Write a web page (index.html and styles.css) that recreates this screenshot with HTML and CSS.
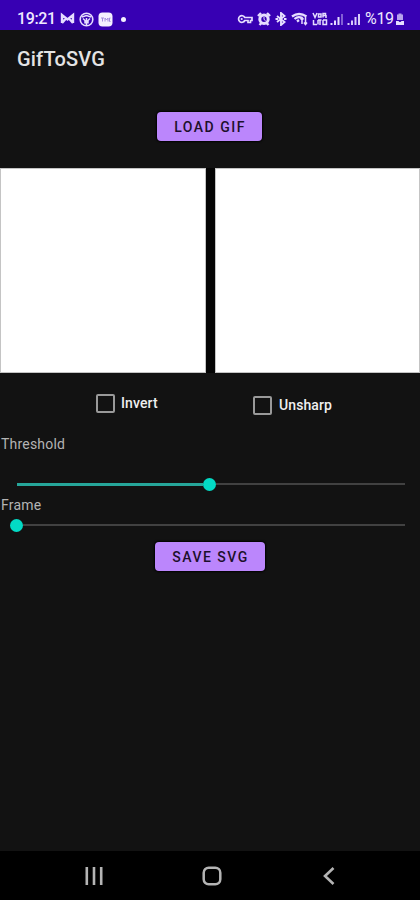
FILE: index.html
```html
<!DOCTYPE html>
<html lang="en">
<head>
  <title>GifToSVG</title>
  <meta charset="utf-8">
  <meta name="viewport" content="width=device-width, initial-scale=1.0">
  <link rel="stylesheet" href="styles.css">
</head>
<body>
  <div class="status-bar">
    <div class="status-left">
      <span class="clock">19:21</span>
      <svg class="icon" width="15" height="14" viewBox="0 0 15 14">
        <path d="M2 11V3l5.500 4.500L13 3v8M2 11l3.500-4M13 11l-3.500-4" fill="none" stroke="#e6ddff" stroke-width="2.400"/>
      </svg>
      <svg class="icon" width="15" height="15" viewBox="0 0 15 15">
        <circle cx="7.500" cy="7.500" r="6.300" fill="none" stroke="#e6ddff" stroke-width="1.600"/>
        <path d="M3 5l4.500-1.500L12 5M7.500 6v7M4 6.500l2 2v3M11 6.500l-2 2v3" fill="none" stroke="#e6ddff" stroke-width="1.500"/>
      </svg>
      <svg class="icon" width="15" height="15" viewBox="0 0 15 15">
        <rect x="0.500" y="0.500" width="14" height="14" rx="4" fill="#f4efff"/>
        <path d="M3 6h3M4.500 6v3.500M7 9.500V6l1.500 2L10 6v3.500M12.500 6h-1v3.500h1" fill="none" stroke="#a28bdd" stroke-width="1"/>
      </svg>
      <span class="dot"></span>
    </div>
    <div class="status-right">
      <svg class="icon" width="16" height="14" viewBox="0 0 16 14">
        <path d="M7.800 5.500A3.300 3.300 0 1 0 7.800 8.500H11V10.500H13.500V8.500H15V5.500Z" fill="none" stroke="#e6ddff" stroke-width="1.700"/>
        <circle cx="4.700" cy="7" r="1.100" fill="#e6ddff"/>
      </svg>
      <svg class="icon" width="14" height="14" viewBox="0 0 14 14">
        <path d="M1 4l3-3M13 4l-3-3M2.500 13l2-2M11.500 13l-2-2" stroke="#e6ddff" stroke-width="2.400"/>
        <circle cx="7" cy="7.300" r="4.200" fill="none" stroke="#e6ddff" stroke-width="3"/>
        <path d="M7 5v2.500l1.500 1" fill="none" stroke="#e6ddff"/>
      </svg>
      <svg class="icon" width="12" height="14" viewBox="0 0 12 14">
        <path d="M2 4l7.500 6L6 13V1l3.500 3L2 10" fill="none" stroke="#e6ddff" stroke-width="1.900"/>
        <path d="M0.500 7h2.500M9 7h2.500" stroke="#e6ddff" stroke-width="2"/>
      </svg>
      <svg class="icon" width="17" height="14" viewBox="0 0 17 14">
        <path d="M1 4.500Q8 -0.500 15.500 4.500M3.500 7Q7 4 11 6M6 9.500l2-1.500" fill="none" stroke="#e6ddff" stroke-width="2.300"/>
        <path d="M11 12V6M9.500 7.500L11 5.500l1.500 2M14.500 5v7M13 10.500l1.500 2 1.500-2" fill="none" stroke="#e6ddff" stroke-width="1.500"/>
      </svg>
      <svg class="icon" width="16" height="14" viewBox="0 0 16 14">
        <path d="M1 1l2 4.500L5 1M6.500 2h2.500v3H6.500zM11 5.500V1.500h2.500v2H11M1.500 8v4.500H5M6 12.500V8M6 8h3.500M8 8v5M11 8v4.500h3.500V8H11M14 3v3" fill="none" stroke="#e6ddff" stroke-width="1.500"/>
      </svg>
      <svg class="icon signal" width="13" height="14" viewBox="0 0 13 14">
        <path d="M1.500 13v-2M5 13V8.500M8.500 13V5" stroke="#e6ddff" stroke-width="2"/>
        <path d="M12 13V2" stroke="#9c7fe0" stroke-width="1.500"/>
      </svg>
      <svg class="icon" width="13" height="14" viewBox="0 0 13 14">
        <path d="M1.500 13v-2M5 13V8.500M8.500 13V5M12 13V2" stroke="#d9ccfa" stroke-width="2"/>
      </svg>
      <span class="battery-text">%19</span>
      <svg class="icon" width="10" height="14" viewBox="0 0 10 14">
        <path d="M3.500 1.500h3v1H8V8H2V2.500h1.500z" fill="#b8a2ed"/>
        <path d="M1 9h2.500l1 1h1l1-1H9v4H1z" fill="#e6ddff"/>
      </svg>
    </div>
  </div>

  <h1 class="title">GifToSVG</h1>

  <button class="button load">LOAD GIF</button>

  <div class="previews">
    <div class="preview"></div>
    <div class="preview"></div>
  </div>

  <div class="options">
    <label class="option"><span class="box"></span>Invert</label>
    <label class="option unsharp"><span class="box"></span>Unsharp</label>
  </div>

  <div class="label threshold-label">Threshold</div>
  <div class="slider threshold">
    <span class="fill"></span>
    <span class="thumb"></span>
    <span class="rest"></span>
  </div>
  <div class="label frame-label">Frame</div>
  <div class="slider">
    <span class="thumb"></span>
    <span class="rest"></span>
  </div>

  <button class="button save">SAVE SVG</button>

  <div class="nav-bar">
    <svg width="18" height="20" viewBox="0 0 18 20">
      <path d="M1.800 1v18M9 1v18M16.200 1v18" stroke="#b4b4b4" stroke-width="2.600"/>
    </svg>
    <svg class="home" width="20" height="20" viewBox="0 0 20 20">
      <rect x="1.700" y="1.700" width="16.600" height="16.600" rx="5" fill="none" stroke="#b4b4b4" stroke-width="2.500"/>
    </svg>
    <svg width="12" height="20" viewBox="0 0 12 20">
      <path d="M10.500 2L2 10l8.500 8" fill="none" stroke="#b4b4b4" stroke-width="2.600"/>
    </svg>
  </div>
</body>
</html>
```
FILE: styles.css
```css
* {
  box-sizing: border-box;
}
body {
  margin: 0;
  height: 900px;
  display: flex;
  flex-direction: column;
  background-color: #121212;
  font-family: Roboto, "Liberation Sans", sans-serif;
  overflow: hidden;
}
.status-bar {
  height: 30px;
  flex-shrink: 0;
  display: flex;
  justify-content: space-between;
  padding: 8px 15px 0 17px;
  background-color: #3700b3;
  color: #efe9ff;
}
.status-left,
.status-right {
  display: flex;
  align-items: center;
  height: 22px;
}
.status-left {
  gap: 4px;
}
.icon {
  flex-shrink: 0;
}
.clock {
  width: 39px;
  font-size: 16px;
  font-weight: 500;
  line-height: 22px;
  letter-spacing: -0.4px;
}
.dot {
  width: 5px;
  height: 5px;
  margin-left: 4px;
  border-radius: 50%;
  background-color: #f4efff;
}
.status-right {
  gap: 4px;
}
.signal {
  margin-left: -2px;
}
.battery-text {
  width: 30px;
  margin-left: 1px;
  margin-right: -4px;
  font-size: 16px;
  line-height: 22px;
  letter-spacing: -0.3px;
}
.title {
  margin: 16px 0 0 17px;
  height: 26px;
  color: #e4e4e4;
  font-size: 20px;
  font-weight: 500;
  line-height: 26px;
  letter-spacing: 0.2px;
}
.button {
  align-self: center;
  height: 29px;
  flex-shrink: 0;
  padding: 0;
  border: none;
  border-radius: 4px;
  background-color: #bb86fc;
  box-shadow: 0 0 2px 1px #000;
  color: #1d102b;
  font-family: inherit;
  font-size: 14px;
  font-weight: 500;
  letter-spacing: 1.5px;
}
.load {
  width: 105px;
  margin-top: 40px;
  margin-right: 1px;
  padding-left: 1px;
}
.save {
  width: 110px;
  margin-top: 10px;
  padding-left: 1px;
}
.previews {
  display: flex;
  gap: 9px;
  height: 205px;
  margin-top: 27px;
  flex-shrink: 0;
  background-color: #050505;
}
.preview {
  flex: 1;
  background-color: #fff;
  border: 1px solid #c4c4c4;
}
.options {
  display: flex;
  align-items: flex-start;
  height: 61px;
  padding: 20px 0 0 96px;
}
.option {
  display: flex;
  align-items: center;
  width: 157px;
  height: 20px;
  color: #efefef;
  font-size: 14px;
  font-weight: 500;
  letter-spacing: 0.1px;
}
.unsharp {
  margin-top: 2px;
}
.box {
  width: 19px;
  height: 19px;
  margin-right: 6px;
  border: 2px solid #999;
  border-radius: 2px;
}
.unsharp .box {
  margin-right: 7px;
}
.label {
  height: 20px;
  padding-left: 1px;
  color: #b4b4b4;
  font-size: 14px;
  line-height: 20px;
  letter-spacing: 0.2px;
}
.slider {
  display: flex;
  align-items: center;
  height: 14px;
  padding: 0 15px 0 10px;
}
.threshold {
  margin-top: 23px;
  padding-left: 17px;
}
.fill {
  width: 186px;
  height: 3px;
  background-color: #26a69a;
}
.thumb {
  width: 13px;
  height: 13px;
  border-radius: 50%;
  background-color: #03dac5;
}
.rest {
  flex: 1;
  height: 2px;
  background-color: #414141;
}
.frame-label {
  margin-top: 4px;
  margin-bottom: 3px;
}
.nav-bar {
  display: flex;
  align-items: center;
  justify-content: space-between;
  height: 49px;
  margin-top: auto;
  padding: 1px 85px 0 85px;
  background-color: #000;
}
.home {
  margin-right: 3px;
}
```
